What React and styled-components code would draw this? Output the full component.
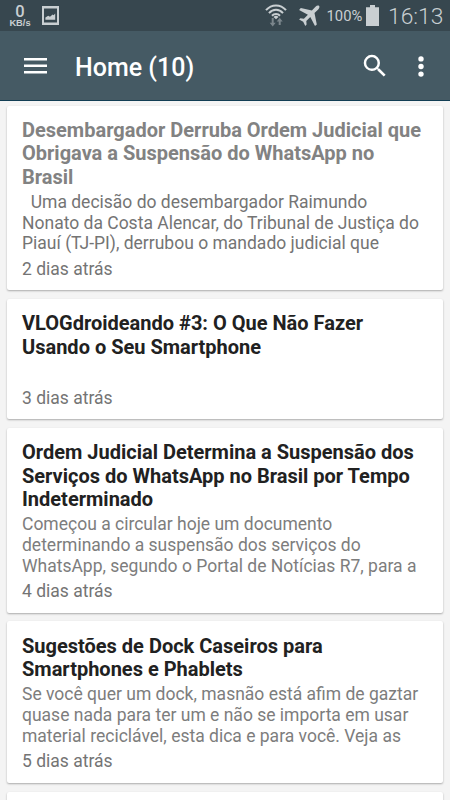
import styled, { createGlobalStyle } from 'styled-components'

const GlobalStyle = createGlobalStyle`
    * {
        box-sizing: border-box;
    }
    body {
        margin: 0;
        background: #f4f4f4;
        font-family: Roboto, sans-serif;
        overflow: hidden;
    }
    svg {
        display: block;
        flex: none;
    }
`

// the line breaks are fixed so the text always wraps the same way
const posts = [
    {
        read: true,
        title: ['Desembargador Derruba Ordem Judicial que', 'Obrigava a Suspensão do WhatsApp no', 'Brasil'],
        text: ['\u00a0 Uma decisão do desembargador Raimundo', 'Nonato da Costa Alencar, do Tribunal de Justiça do', 'Piauí (TJ-PI), derrubou o mandado judicial que'],
        date: '2 dias atrás',
    },
    {
        title: ['VLOGdroideando #3: O Que Não Fazer', 'Usando o Seu Smartphone'],
        text: [''],
        date: '3 dias atrás',
    },
    {
        title: ['Ordem Judicial Determina a Suspensão dos', 'Serviços do WhatsApp no Brasil por Tempo', 'Indeterminado'],
        text: ['Começou a circular hoje um documento', 'determinando a suspensão dos serviços do', 'WhatsApp, segundo o Portal de Notícias R7, para a'],
        date: '4 dias atrás',
    },
    {
        title: ['Sugestões de Dock Caseiros para', 'Smartphones e Phablets'],
        text: ['Se você quer um dock, masnão está afim de gaztar', 'quase nada para ter um e não se importa em usar', 'material reciclável, esta dica e para você. Veja as'],
        date: '5 dias atrás',
    },
]

const PictureIcon = () => (
    <svg width="17" height="20" viewBox="0 0 17 20">
        <path fill="#c9cfd2" fillRule="evenodd" d="M0 0h17v19H0zM2 2.400v14.200h13V2.400z" />
        <path fill="#c9cfd2" d="M3.400 13.800v-2.200l2.800-1.800 1.800 1 2.600-2.200 1 .6 1.600-1.600v6.200z" />
    </svg>
)

const WifiIcon = () => (
    <svg width="22" height="23" viewBox="0 0 22 23">
        <g fill="none" stroke="#c9cfd2" strokeWidth="2">
            <path d="M1 6.200C6.500 -.2 15.500 -.2 21 6.200" />
            <path d="M4 9.100C8 4.700 14 4.700 18 9.100" />
            <path d="M7 11.700C9.200 9.300 12.800 9.300 15 11.700" />
        </g>
        <path fill="#c9cfd2" d="M8.500 13q2.500-2.300 5 0L11 15.300z" />
        <path fill="#7b868c" d="M6.700 14h2v4.700h2l-3 3.800-3-3.800h2zM13.700 21v-3.500h-2l3-3.800 3 3.800h-2V21z" />
    </svg>
)

const PlaneIcon = () => (
    <svg width="22" height="22" viewBox="0 0 22 22">
        <path fill="#c9cfd2" d="M21 .8c.9.9.3 2.500-.8 3.600l-3.700 3.700 2.300 11.300-1.800 1.500-4.700-8.800-4 4 .3 3.500-1.300 1.300-2.100-4.200-4.100-2.100 1.300-1.300 3.500.4 4-4L1.100 4.900l1.700-1.800 11.100 2.300L17.500 1.700C18.600.5 20.200 0 21 .8z" />
    </svg>
)

const BatteryIcon = () => (
    <svg width="13" height="21" viewBox="0 0 13 21">
        <path fill="#c9cfd2" d="M4 0h5v2.300h4V21H0V2.300h4z" />
    </svg>
)

const MenuIcon = () => (
    <svg width="23" height="16" viewBox="0 0 23 16">
        <path fill="#fff" d="M0 0h23v2.500H0zM0 6.500h23V9H0zM0 13h23v2.500H0z" />
    </svg>
)

const SearchIcon = () => (
    <svg width="30" height="30" viewBox="0 0 24 24">
        <path fill="#fff" d="M15.500 14h-.79l-.28-.27A6.471 6.471 0 0 0 16 9.500 6.500 6.500 0 1 0 9.500 16c1.610 0 3.090-.59 4.230-1.570l.27.28v.79l5 4.990L20.490 19l-4.990-5zm-6 0C7.010 14 5 11.990 5 9.500S7.010 5 9.500 5 14 7.010 14 9.500 11.990 14 9.500 14z" />
    </svg>
)

const MoreIcon = () => (
    <svg width="6" height="21" viewBox="0 0 6 21">
        <g fill="#fff">
            <circle cx="3" cy="2.900" r="2.700" />
            <circle cx="3" cy="10.500" r="2.700" />
            <circle cx="3" cy="18.100" r="2.700" />
        </g>
    </svg>
)

const Post = ({ post }) => (
    <Card>
        <Title $read={post.read}>
            {post.title.map((line) => <Line key={line}>{line}</Line>)}
        </Title>
        <Text $read={post.read}>
            {post.text.map((line) => <Line key={line}>{line}</Line>)}
        </Text>
        <PostDate>{post.date}</PostDate>
    </Card>
)

const App = () => {
    return (
        <Screen>
            <GlobalStyle />
            <StatusBar>
                <Speed>
                    <SpeedValue>0</SpeedValue>
                    <SpeedUnit>KB/s</SpeedUnit>
                </Speed>
                <PictureIcon />
                <StatusRight>
                    <WifiIcon />
                    <PlaneIcon />
                    <Percent>100%</Percent>
                    <BatteryIcon />
                    <Clock>16:13</Clock>
                </StatusRight>
            </StatusBar>
            <Toolbar>
                <IconButton aria-label="Menu"><MenuIcon /></IconButton>
                <Heading>Home (10)</Heading>
                <IconButton aria-label="Buscar"><SearchIcon /></IconButton>
                <IconButton aria-label="Mais" $narrow><MoreIcon /></IconButton>
            </Toolbar>
            <List>
                {posts.map((post) => <Post key={post.date} post={post} />)}
                <Card />
            </List>
        </Screen>
    )
}

const Screen = styled.div`
    display: flex;
    flex-direction: column;
    width: 450px;
    height: 800px;
    overflow: hidden;
    background: #f4f4f4;
`

const StatusBar = styled.div`
    display: flex;
    flex: none;
    align-items: flex-start;
    height: 31px;
    padding: 4px 8px 0 9px;
    background: #37474f;
    color: #c9cfd2;
    & > svg {
        margin: 2px 0 0 11px;
    }
`

const Speed = styled.div`
    display: flex;
    flex-direction: column;
    align-items: center;
    width: 22px;
`

const SpeedValue = styled.span`
    font-size: 16.5px;
    font-weight: 500;
    line-height: 15px;
`

const SpeedUnit = styled.span`
    font-family: "Liberation Sans", sans-serif;
    font-size: 9.3px;
    font-weight: 700;
    line-height: 9px;
`

const StatusRight = styled.div`
    display: flex;
    align-items: flex-start;
    margin-left: auto;
    & > svg:nth-of-type(2) {
        margin: 1px 0 0 11px;
    }
    & > svg:nth-of-type(3) {
        margin: 1px 0 0 4px;
    }
`

const Percent = styled.span`
    width: 35px;
    margin-left: 6.5px;
    margin-right: 0.5px;
    font-size: 14.8px;
    line-height: 25px;
    white-space: nowrap;
`

const Clock = styled.span`
    width: 54px;
    margin-left: 9px;
    font-size: 22.8px;
    font-weight: 300;
    line-height: 26px;
    white-space: nowrap;
`

const Toolbar = styled.header`
    display: flex;
    flex: none;
    align-items: center;
    height: 70px;
    padding: 1px 7px 0 12px;
    background: #455a64;
    border-bottom: 1px solid #123e54;
    color: #fff;
`

const IconButton = styled.button`
    display: flex;
    align-items: center;
    justify-content: center;
    width: ${(props) => (props.$narrow ? '45px' : '46px')};
    height: 46px;
    padding: 0;
    border: 0;
    background: none;
`

const Heading = styled.h1`
    flex: 1;
    margin: 3px 0 0 17px;
    font-size: 25px;
    font-weight: 500;
    line-height: 30px;
`

const List = styled.main`
    display: flex;
    flex-direction: column;
    gap: 8.95px;
    padding: 4.5px 7px 0;
`

const Card = styled.article`
    flex: none;
    min-height: 40px;
    padding: 13.3px 15px 10.8px;
    background: #fff;
    border-radius: 2px;
    box-shadow: 0 1px 2px rgba(0, 0, 0, 0.3);
`

const Title = styled.h2`
    margin: 0 0 2.9px;
    color: ${(props) => (props.$read ? '#828282' : '#212121')};
    font-size: 20px;
    font-weight: 700;
    line-height: 23.4px;
`

const Text = styled.p`
    margin: 0 0 5px;
    color: ${(props) => (props.$read ? '#747474' : '#7d7d7d')};
    font-size: 17.5px;
    line-height: 20.6px;
`

const Line = styled.span`
    display: block;
    min-height: 20.6px;
    white-space: nowrap;
`

const PostDate = styled.time`
    display: block;
    color: #747474;
    font-size: 17.5px;
    line-height: 20.6px;
`

export default App
